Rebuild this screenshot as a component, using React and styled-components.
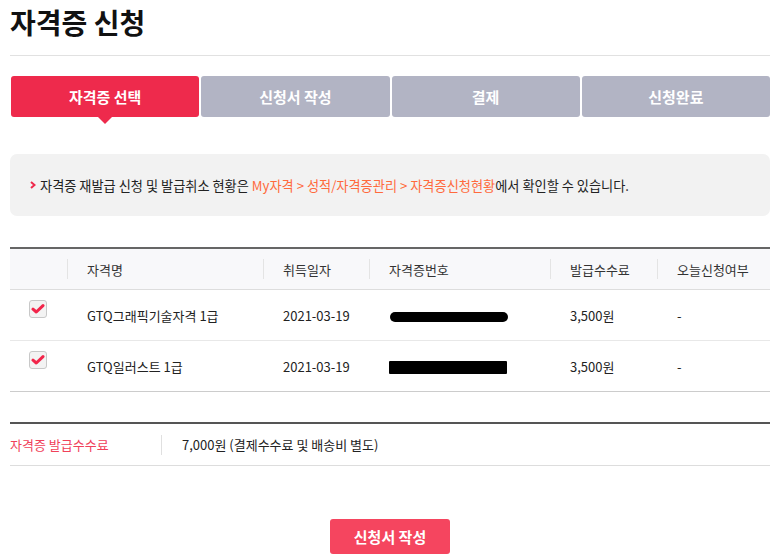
import React from 'react'
import styled, { createGlobalStyle } from 'styled-components'

const GlobalStyle = createGlobalStyle`
  body {
    margin: 0;
    background: #fff;
    font-family: 'Noto Sans CJK KR', 'Noto Sans', sans-serif;
    color: #222;
  }
`

const Page = styled.div`
  padding: 0 11px 0 10px;
`

const Title = styled.h1`
  margin: 0;
  padding: 2px 0 13px;
  font-size: 28px;
  font-weight: 700;
  line-height: 40px;
  color: #111;
  border-bottom: 1px solid #e1e1e1;
`

const Steps = styled.ul`
  list-style: none;
  margin: 20px 0 0;
  padding: 0 0 0 1px;
  display: grid;
  grid-template-columns: repeat(4, 1fr);
  gap: 2px;
`

const Step = styled.li`
  position: relative;
  height: 41px;
  border-radius: 3px;
  display: flex;
  align-items: center;
  justify-content: center;
  font-size: 15px;
  font-weight: 700;
  color: #fff;
  background: ${p => (p.$active ? '#ee2a4c' : '#b2b4c4')};

  &::after {
    content: '';
    display: ${p => (p.$active ? 'block' : 'none')};
    position: absolute;
    left: 50%;
    bottom: -7px;
    margin-left: -7px;
    border-left: 7px solid transparent;
    border-right: 7px solid transparent;
    border-top: 7px solid #ee2a4c;
  }
`

const Notice = styled.div`
  margin-top: 37px;
  height: 62px;
  border-radius: 7px;
  background: #f2f2f2;
  display: flex;
  align-items: center;
  padding-left: 20px;
  font-size: 13.2px;
  color: #222;
`

const Chevron = styled.svg`
  margin-right: 4px;
  flex: none;
`

const Hl = styled.span`
  color: #ff6a3d;
`

const Table = styled.table`
  margin-top: 31px;
  width: 100%;
  border-collapse: collapse;
  border-top: 2px solid #666;
  font-size: 13px;
  color: #222;
`

const Th = styled.th`
  position: relative;
  height: 40px;
  padding: 0 0 0 20px;
  text-align: left;
  font-weight: 400;
  color: #333;
  background: #f8f8fa;
  border-bottom: 1px solid #ddd;
  width: ${p => p.$w || 'auto'};

  &::before {
    content: '';
    display: ${p => (p.$first ? 'none' : 'block')};
    position: absolute;
    left: 0;
    top: 10px;
    height: 20px;
    width: 1px;
    background: #e4e4e4;
  }
`

const Td = styled.td`
  height: 51px;
  box-sizing: border-box;
  padding: 0 0 0 20px;
  border-bottom: 1px solid ${p => (p.$last ? '#ccc' : '#e8e8e8')};
  vertical-align: middle;
`

const CheckCell = styled(Td)`
  padding: 10px 0 0 19px;
  vertical-align: top;
`

const Box = styled.span`
  display: block;
  width: 16px;
  height: 16px;
  border: 1px solid #c8c8c8;
  border-radius: 3px;
  background: #f3f3f3;
  position: relative;

  svg {
    position: absolute;
    left: 1px;
    top: 1px;
  }
`

const Redact = styled.span`
  display: inline-block;
  width: 118px;
  height: ${p => (p.$blob ? '10px' : '13px')};
  background: #000;
  border-radius: ${p => (p.$blob ? '6px' : '1px')};
  vertical-align: middle;
  margin-left: ${p => (p.$blob ? '1px' : '0')};
`

const Summary = styled.div`
  margin-top: 30px;
  border-top: 2px solid #555;
  border-bottom: 1px solid #ddd;
  height: 41px;
  display: flex;
  align-items: center;
  font-size: 13px;
`

const SumLabel = styled.div`
  width: 151px;
  color: #f0415a;
  border-right: 1px solid #e0e0e0;
  line-height: 20px;
`

const SumValue = styled.div`
  padding-left: 20px;
  color: #222;
`

const Actions = styled.div`
  display: flex;
  justify-content: center;
  margin-top: 53px;
`

const Submit = styled.button`
  width: 120px;
  height: 35px;
  border: 0;
  border-radius: 3px;
  background: #f5455f;
  color: #fff;
  font-family: inherit;
  font-size: 15px;
  font-weight: 700;
`

const Check = () => (
  <Box>
    <svg width='14' height='14' viewBox='0 0 14 14'>
      <path d='M2 7.2 L5.3 10 L12 3.6' fill='none' stroke='#f2254a' strokeWidth='3' strokeLinecap='round' strokeLinejoin='round' />
    </svg>
  </Box>
)

const rows = [
  { name: 'GTQ그래픽기술자격 1급', date: '2021-03-19', blob: true, fee: '3,500원', today: '-' },
  { name: 'GTQ일러스트 1급', date: '2021-03-19', blob: false, fee: '3,500원', today: '-' },
]

const steps = ['자격증 선택', '신청서 작성', '결제', '신청완료']

const App = () => {
  return (
    <Page>
      <GlobalStyle />
      <Title>자격증 신청</Title>
      <Steps>
        {steps.map((s, i) => (
          <Step key={s} $active={i === 0}>
            {s}
          </Step>
        ))}
      </Steps>
      <Notice>
        <Chevron width='6' height='8' viewBox='0 0 6 8'>
          <path d='M1 1 L4.5 4 L1 7' fill='none' stroke='#ee2a4c' strokeWidth='2' />
        </Chevron>
        자격증 재발급 신청 및 발급취소 현황은&nbsp;<Hl>My자격 &gt; 성적/자격증관리 &gt; 자격증신청현황</Hl>에서 확인할 수 있습니다.
      </Notice>
      <Table>
        <thead>
          <tr>
            <Th $first $w='37px' />
            <Th $w='176px'>자격명</Th>
            <Th $w='86px'>취득일자</Th>
            <Th $w='161px'>자격증번호</Th>
            <Th $w='87px'>발급수수료</Th>
            <Th>오늘신청여부</Th>
          </tr>
        </thead>
        <tbody>
          {rows.map((r, i) => (
            <tr key={r.name}>
              <CheckCell $last={i === rows.length - 1}>
                <Check />
              </CheckCell>
              <Td $last={i === rows.length - 1}>{r.name}</Td>
              <Td $last={i === rows.length - 1}>{r.date}</Td>
              <Td $last={i === rows.length - 1}>
                <Redact $blob={r.blob} />
              </Td>
              <Td $last={i === rows.length - 1}>{r.fee}</Td>
              <Td $last={i === rows.length - 1}>{r.today}</Td>
            </tr>
          ))}
        </tbody>
      </Table>
      <Summary>
        <SumLabel>자격증 발급수수료</SumLabel>
        <SumValue>7,000원 (결제수수료 및 배송비 별도)</SumValue>
      </Summary>
      <Actions>
        <Submit>신청서 작성</Submit>
      </Actions>
    </Page>
  )
}

export default App
